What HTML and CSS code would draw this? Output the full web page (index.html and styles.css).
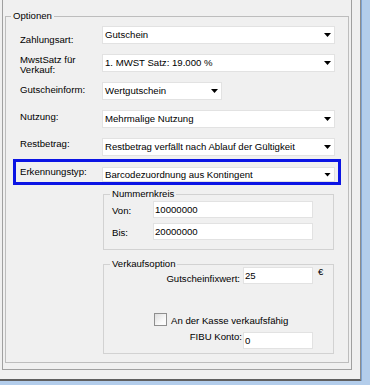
FILE: index.html
```html
<!DOCTYPE html>
<html>
<head>
    <meta charset="UTF-8">
    <title>Gutschein Optionen</title>
    <link rel="stylesheet" href="styles.css">
</head>
<body>
    <div class="window">
        <div class="panel">
            <fieldset class="group options">
                <legend>Optionen</legend>
                <div class="form">
                    <div class="row">
                        <label class="label low">Zahlungsart:</label>
                        <div class="combo"><span>Gutschein</span><i class="arrow"></i></div>
                    </div>
                    <div class="row">
                        <label class="label wrap">MwstSatz für Verkauf:</label>
                        <div class="combo"><span>1. MWST Satz: 19.000 %</span><i class="arrow"></i></div>
                    </div>
                    <div class="row">
                        <label class="label mid">Gutscheinform:</label>
                        <div class="combo short"><span>Wertgutschein</span><i class="arrow"></i></div>
                    </div>
                    <div class="row">
                        <label class="label">Nutzung:</label>
                        <div class="combo"><span>Mehrmalige Nutzung</span><i class="arrow"></i></div>
                    </div>
                    <div class="row">
                        <label class="label top">Restbetrag:</label>
                        <div class="combo"><span>Restbetrag verfällt nach Ablauf der Gültigkeit</span><i class="arrow"></i></div>
                    </div>

                    <div class="row highlight">
                        <label class="label raised">Erkennungstyp:</label>
                        <div class="combo"><span>Barcodezuordnung aus Kontingent</span><i class="arrow"></i></div>
                    </div>

                    <fieldset class="group sub numbers">
                        <legend>Nummernkreis</legend>
                        <div class="pairs">
                            <label class="pair-label">Von:</label>
                            <div class="field">10000000</div>
                            <label class="pair-label">Bis:</label>
                            <div class="field">20000000</div>
                        </div>
                    </fieldset>

                    <fieldset class="group sub sale">
                        <legend>Verkaufsoption</legend>
                        <div class="sale-row first">
                            <label class="sale-label">Gutscheinfixwert:</label>
                            <div class="field">25</div>
                            <span class="currency">€</span>
                        </div>
                        <div class="check-row">
                            <span class="checkbox"></span>
                            <label class="check-label">An der Kasse verkaufsfähig</label>
                        </div>
                        <div class="sale-row last">
                            <label class="sale-label">FIBU Konto:</label>
                            <div class="field">0</div>
                        </div>
                    </fieldset>
                </div>
            </fieldset>
        </div>
    </div>
</body>
</html>
```

FILE: styles.css
```css
* {
    margin: 0;
    padding: 0;
    box-sizing: border-box;
}

body {
    width: 370px;
    height: 385px;
    overflow: hidden;
    background: #b3cdeb;
    font-family: "Liberation Sans", Arial, sans-serif;
    font-size: 9.6px;
    line-height: 12px;
    color: #000;
}

/* window frame, cut off at top and left */
.window {
    width: 361px;
    height: 381px;
    padding-left: 2px;
    background: #f0f0f0;
    border-right: 1px solid #8c8c8c;
    border-bottom: 2px solid #5f5f5f;
    box-shadow: 1px 0 0 #7ea3d2;
}

.panel {
    width: 350px;
    height: 370px;
    padding: 10px 2px 0;
    border: 1px solid #a0a0a0;
    border-top: none;
}

.group {
    border: 1px solid #d2d2d2;
    min-width: 0;
}

.group legend {
    margin-left: 5px;
    padding: 0 2px;
}

.options {
    border-color: #bdbdbd;
}

.form {
    padding: 4px 13px 8px 14px;
}

.row {
    display: grid;
    grid-template-columns: 82px 1fr;
    grid-template-rows: 18px;
    height: 18px;
}

.row + .row {
    margin-top: 10px;
}

.label {
    padding-top: 1px;
    white-space: nowrap;
}

.label.low { padding-top: 8px; }
.label.mid { padding-top: 2px; }
.label.top { padding-top: 0; }
.label.wrap {
    line-height: 10px;
    white-space: normal;
    width: 60px;
}

.combo {
    display: flex;
    align-items: center;
    justify-content: space-between;
    height: 18px;
    padding: 0 3px 0 2px;
    background: #fff;
    border: 1px solid #e2e2e2;
    white-space: nowrap;
    overflow: hidden;
}

.combo.short {
    width: 120px;
}

.arrow {
    flex: none;
    width: 7px;
    height: 4px;
    background: #000;
    clip-path: polygon(0 0, 100% 0, 50% 100%);
}

/* blue marker around the selected row */
.row.highlight {
    height: 26px;
    grid-template-rows: 15px;
    margin: 3px -6px 0 -7px;
    padding: 5px 3px 0 4px;
    border: 3px solid #0b14e4;
}

.highlight .combo {
    height: 15px;
}

.label.raised {
    padding-top: 0;
    margin-top: -1px;
}

.sub {
    width: 231px;
    margin-left: 83px;
}

.sub legend {
    margin-left: 6px;
    line-height: 10px;
}

.numbers {
    margin-top: 4px;
}

.sale {
    margin-top: 9px;
}

.pairs {
    display: grid;
    grid-template-columns: 41px 160px;
    grid-auto-rows: 17px;
    row-gap: 5px;
    padding: 2px 0 9px 8px;
}

.pair-label {
    padding-top: 4px;
}

.field {
    height: 17px;
    padding: 1px 0 0 1px;
    line-height: 14px;
    background: #fff;
    border: 1px solid #e2e2e2;
}

.sale-row {
    display: grid;
    grid-template-columns: 139px 70px 1fr;
    height: 17px;
}

.sale-row.first {
    margin-top: -2px;
}

.sale-row.last {
    margin-top: 6px;
    margin-bottom: 4px;
}

.sale-label {
    text-align: right;
    padding-right: 3px;
    white-space: nowrap;
}

.first .sale-label {
    padding-top: 6px;
}

.last .sale-label {
    margin-top: -1px;
    padding-right: 1px;
}

.currency {
    padding-left: 5px;
    margin-top: -1px;
}

.check-row {
    display: flex;
    align-items: flex-start;
    gap: 4px;
    height: 13px;
    margin-top: 29px;
    padding-left: 50px;
}

.checkbox {
    flex: none;
    width: 13px;
    height: 13px;
    border: 1px solid #8f8f8f;
    background: linear-gradient(135deg, #dedede, #fbfbfb 70%);
}

.check-label {
    padding-top: 2px;
    white-space: nowrap;
}
```
